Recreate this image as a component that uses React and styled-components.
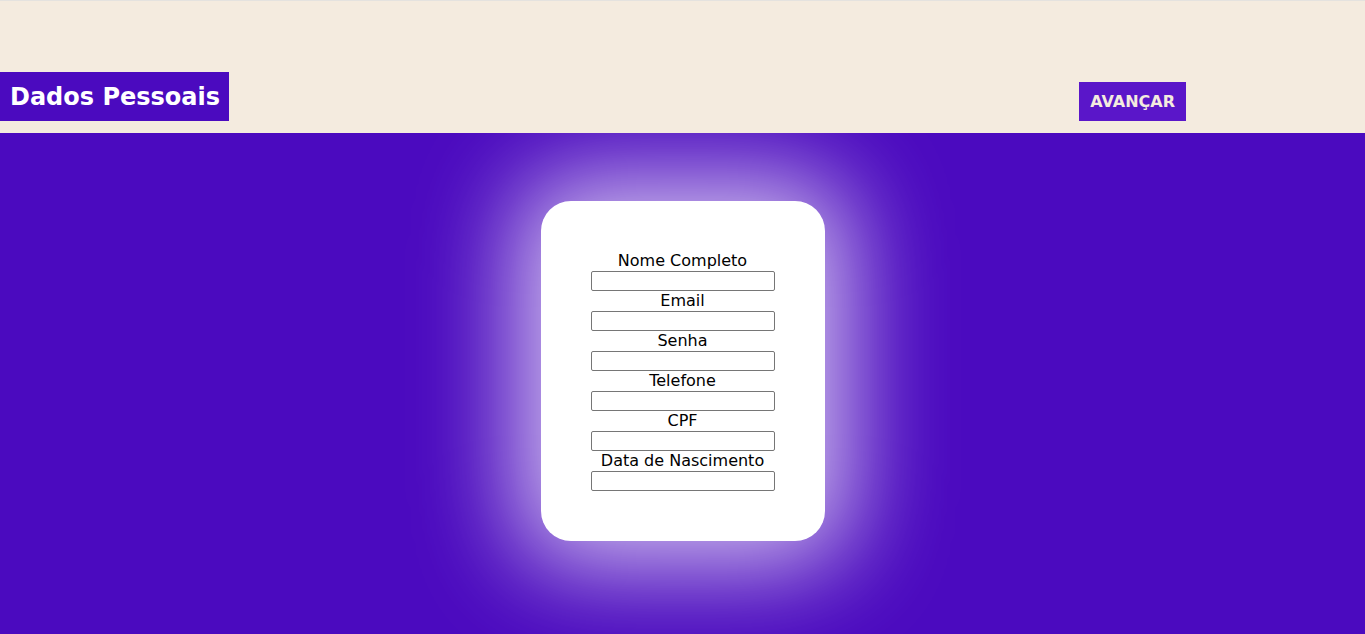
import styled, { createGlobalStyle } from 'styled-components';

const GlobalStyle = createGlobalStyle`
  html, body {
    margin: 0;
    padding: 0;
    background: #4b0abf;
    font-family: "DejaVu Sans", Verdana, sans-serif;
  }
`;

const Page = styled.div`
  min-height: 634px;
  display: flex;
  flex-direction: column;
`;

const Header = styled.header`
  height: 133px;
  box-sizing: border-box;
  background: #f4ebdf;
  border-top: 1px solid #e4e2df;
  display: flex;
  align-items: flex-end;
  justify-content: space-between;
  padding: 0 179px 12px 0;
`;

const Title = styled.h1`
  margin: 0;
  height: 49px;
  padding: 0 9px 0 10px;
  background: #4b0abf;
  color: #fff;
  font-size: 24px;
  font-weight: bold;
  display: flex;
  align-items: center;
`;

const NextButton = styled.button`
  height: 39px;
  padding: 0 11px;
  border: none;
  background: #5a16c9;
  color: #f4ebdf;
  font-family: "DejaVu Sans", Verdana, sans-serif;
  font-size: 16px;
  font-weight: bold;
  cursor: pointer;
`;

const Main = styled.main`
  flex: 1;
  background: #4b0abf;
  display: flex;
  justify-content: center;
  padding-top: 68px;
  overflow: hidden;
`;

const Card = styled.form`
  width: 284px;
  height: 340px;
  box-sizing: border-box;
  padding: 50px 0;
  background: #fff;
  border-radius: 30px;
  box-shadow: 0 0 100px 25px rgba(255, 255, 255, 0.75);
  display: flex;
  flex-direction: column;
  align-items: center;
`;

const Label = styled.label`
  display: block;
  height: 20px;
  line-height: 20px;
  font-size: 16px;
  color: #000;
  text-align: center;
`;

const Input = styled.input`
  display: block;
  width: 184px;
  height: 20px;
  box-sizing: border-box;
  border: 1px solid #767676;
  border-radius: 2px;
  padding: 1px 2px;
  margin: 0;
`;

const fields = ['Nome Completo', 'Email', 'Senha', 'Telefone', 'CPF', 'Data de Nascimento'];

export default function App() {
  return (
    <Page>
      <GlobalStyle />
      <Header>
        <Title>Dados Pessoais</Title>
        <NextButton type="button">AVANÇAR</NextButton>
      </Header>
      <Main>
        <Card>
          {fields.map((f) => (
            <div key={f}>
              <Label>{f}</Label>
              <Input type={f === 'Senha' ? 'password' : 'text'} />
            </div>
          ))}
        </Card>
      </Main>
    </Page>
  );
}
